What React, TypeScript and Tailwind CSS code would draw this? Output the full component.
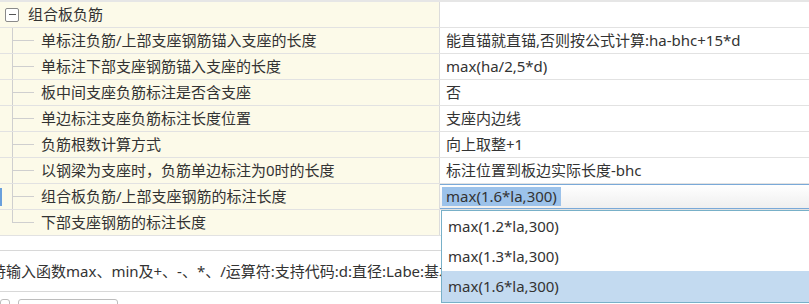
import React from "react"

const rows = [
  { name: "单标注负筋/上部支座钢筋锚入支座的长度", value: "能直锚就直锚,否则按公式计算:ha-bhc+15*d" },
  { name: "单标注下部支座钢筋锚入支座的长度", value: "max(ha/2,5*d)" },
  { name: "板中间支座负筋标注是否含支座", value: "否" },
  { name: "单边标注支座负筋标注长度位置", value: "支座内边线" },
  { name: "负筋根数计算方式", value: "向上取整+1" },
  { name: "以钢梁为支座时，负筋单边标注为0时的长度", value: "标注位置到板边实际长度-bhc" },
  { name: "组合板负筋/上部支座钢筋的标注长度", value: "max(1.6*la,300)", editing: true },
  { name: "下部支座钢筋的标注长度", value: "" },
]

const options = ["max(1.2*la,300)", "max(1.3*la,300)", "max(1.6*la,300)"]

export default function App() {
  return (
    <div className="relative w-[809px] h-[304px] overflow-hidden bg-white text-[15px] text-[#333] font-['Noto_Sans','Noto_Sans_CJK_SC',sans-serif]">
      {/* top band */}
      <div className="h-[2px] bg-[#e6e6e6]" />

      {/* group header */}
      <div className="flex h-[26px] border-b border-[#e2e2e2]">
        <div className="flex w-[440px] items-center bg-[#fcfae9] border-r border-[#dcdcdc]">
          <div className="ml-[5px] flex h-[14px] w-[14px] items-center justify-center rounded-[2px] border border-[#8a8a8a] bg-white">
            <div className="h-[1px] w-[7px] bg-[#555]" />
          </div>
          <span className="ml-[9px] leading-none">组合板负筋</span>
        </div>
        <div className="flex-1" />
      </div>

      {/* child rows */}
      {rows.map((r, i) => {
        const last = i === rows.length - 1
        return (
          <div key={i} className="flex h-[26px] border-b border-[#e2e2e2]">
            <div className="relative flex w-[440px] bg-[#fcfae9] border-r border-[#dcdcdc]">
              {r.editing && <div className="absolute left-0 top-[4px] h-[18px] w-[2px] bg-[#6aa0dc]" />}
              <div className="w-[12px]" />
              <div className="flex w-[22px] flex-col">
                <div className="h-[13px] border-l border-b border-[#cfcfcf]" />
                <div className={last ? "flex-1" : "flex-1 border-l border-[#cfcfcf]"} />
              </div>
              <span className="ml-[7px] self-center leading-none whitespace-nowrap">{r.name}</span>
            </div>
            {r.editing ? (
              <div className="flex flex-1 items-center border-y border-[#7aa9d8] bg-gradient-to-b from-white to-[#efefef] pl-[2px]">
                <span className="bg-[#9cc2ea] px-[4px] py-[2px] leading-none">{r.value}</span>
              </div>
            ) : (
              <div className="flex flex-1 items-center pl-[6px] whitespace-nowrap leading-none">{r.value}</div>
            )}
          </div>
        )
      })}

      {/* tip area */}
      <div className="mt-[14px] flex h-[42px] items-center border-y border-[#d8d8d8] whitespace-nowrap">
        <span className="ml-[-9px]">持输入函数max、min及+、-、*、/运算符:支持代码:d:直径:Labe:基本锚固长度</span>
      </div>
      <div className="mt-[7px] flex gap-[8px]">
        <div className="h-[20px] w-[10px] rounded-[3px] border border-[#bdbdbd]" />
        <div className="h-[20px] w-[100px] rounded-[3px] border border-[#bdbdbd]" />
      </div>

      {/* dropdown list */}
      <div className="absolute left-[441px] top-[210px] w-[380px] border border-[#78b0c8] bg-white">
        {options.map((o, i) => (
          <div
            key={o}
            className={
              i === options.length - 1
                ? "flex h-[31px] items-center bg-[#c3daf0] pl-[6px] leading-none"
                : "flex h-[30px] items-center pl-[6px] leading-none"
            }
          >
            {o}
          </div>
        ))}
      </div>
    </div>
  )
}
